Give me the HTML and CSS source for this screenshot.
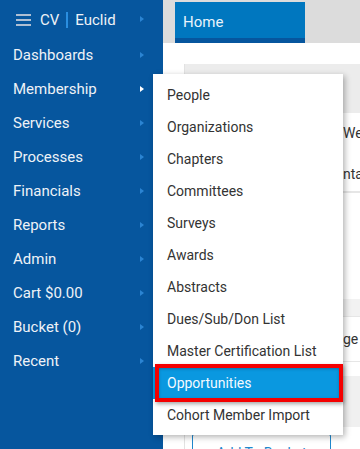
FILE: index.html
```html
<!DOCTYPE html>
<html>
<head>
<meta charset="utf-8">
<link rel="stylesheet" href="styles.css">
</head>
<body>
<div class="app">
  <nav class="sidebar">
    <div class="brand">
      <span class="burger"><i></i><i></i><i></i></span>
      <span class="cv">CV</span>
      <span class="sep"></span>
      <span class="euclid">Euclid</span>
      <span class="arrow"></span>
    </div>
    <div class="item">Dashboards<span class="arrow"></span></div>
    <div class="item">Membership<span class="arrow white"></span></div>
    <div class="item">Services<span class="arrow"></span></div>
    <div class="item">Processes<span class="arrow"></span></div>
    <div class="item">Financials<span class="arrow"></span></div>
    <div class="item">Reports<span class="arrow"></span></div>
    <div class="item">Admin<span class="arrow"></span></div>
    <div class="item">Cart $0.00<span class="arrow"></span></div>
    <div class="item">Bucket (0)<span class="arrow"></span></div>
    <div class="item">Recent<span class="arrow"></span></div>
  </nav>
  <main class="main">
    <div class="topbar">
      <div class="tab">Home</div>
    </div>
    <div class="content">
      <div class="panel">
        <div class="panel-head"></div>
        <div class="row r1"><span class="txt">Wee</span></div>
        <div class="row r2"><span class="txt">nta</span></div>
        <div class="gap"></div>
        <div class="band"></div>
        <div class="row r3"><span class="txt">ge</span></div>
        <div class="gap2"></div>
        <div class="band2"></div>
        <div class="btnrow"><span class="btn">Add To Bucket</span></div>
      </div>
    </div>
  </main>
  <div class="dropdown">
    <div class="dd-item">People</div>
    <div class="dd-item">Organizations</div>
    <div class="dd-item">Chapters</div>
    <div class="dd-item">Committees</div>
    <div class="dd-item">Surveys</div>
    <div class="dd-item">Awards</div>
    <div class="dd-item">Abstracts</div>
    <div class="dd-item">Dues/Sub/Don List</div>
    <div class="dd-item">Master Certification List</div>
    <div class="dd-item active">Opportunities</div>
    <div class="dd-item">Cohort Member Import</div>
    <div class="frame"></div>
  </div>
</div>
</body>
</html>
```
FILE: styles.css
```css
* { box-sizing: border-box; }
html, body { margin: 0; padding: 0; }
body {
  font-family: Roboto, "Noto Sans", Arial, sans-serif;
  width: 360px;
  height: 449px;
  overflow: hidden;
  background: #fff;
}
.app {
  position: relative;
  display: flex;
  width: 360px;
  height: 449px;
  overflow: hidden;
}
.sidebar {
  width: 163px;
  flex: none;
  height: 449px;
  background: #06569e;
  color: #eef2f7;
}
.brand {
  height: 38px;
  display: flex;
  align-items: center;
  padding-left: 16px;
  font-size: 15px;
  position: relative;
}
.burger {
  display: flex;
  flex-direction: column;
  gap: 3px;
  width: 15px;
  margin-right: 9px;
  margin-top: 2px;
}
.burger i {
  display: block;
  height: 2px;
  background: #aebfd3;
}
.cv { margin-top: 1px; }
.sep {
  width: 2px;
  height: 16px;
  background: #2a8ee0;
  margin: 1px 7px 0 7px;
}
.euclid { margin-top: 1px; }
.item {
  height: 34px;
  display: flex;
  align-items: center;
  padding-left: 13px;
  font-size: 15px;
  position: relative;
}
.arrow {
  position: absolute;
  left: 140px;
  top: 50%;
  margin-top: -3px;
  width: 0;
  height: 0;
  border-top: 3.5px solid transparent;
  border-bottom: 3.5px solid transparent;
  border-left: 4px solid #2b84d2;
}
.arrow.white { border-left-color: #ffffff; }
.main {
  flex: 1;
  display: flex;
  flex-direction: column;
  min-width: 0;
}
.topbar {
  height: 43px;
  background: #dcdcdc;
  padding: 2px 0 0 12px;
}
.tab {
  width: 130px;
  height: 41px;
  background: #0077bf;
  border-bottom: 5px solid #06569e;
  color: #e9f3fb;
  font-size: 15px;
  padding: 11px 0 0 8px;
}
.content {
  flex: 1;
  padding: 21px 0 0 21px;
}
.panel {
  border-left: 1px solid #e2e2e2;
  width: 176px;
}
.panel-head {
  height: 49px;
  background: #ececec;
}
.row {
  height: 40px;
  display: flex;
  align-items: center;
  padding-left: 158px;
  font-size: 14px;
  color: #333;
}
.r2 { border-bottom: 2px solid #e6e6e6; padding-top: 4px; }
.txt { white-space: nowrap; }
.gap { height: 106px; }
.band { height: 18px; background: #f2f2f2; border-bottom: 1px solid #e6e6e6; }
.row.r3 { height: 45px; border-bottom: 1px solid #e6e6e6; }
.gap2 { height: 14px; }
.band2 { height: 51px; background: #f0f0f0; }
.btnrow { padding: 7px 0 0 7px; }
.btn {
  display: block;
  width: 139px;
  height: 30px;
  border: 1px solid #1f87cc;
  border-radius: 2px;
  color: #1f87cc;
  font-size: 14px;
  text-align: center;
  padding-top: 10px;
}
.dropdown {
  position: absolute;
  left: 153px;
  top: 74px;
  width: 190px;
  height: 361px;
  background: #fff;
  box-shadow: 2px 2px 6px rgba(0,0,0,0.3);
  padding-top: 5px;
}
.dd-item {
  height: 32px;
  display: flex;
  align-items: center;
  padding-left: 14px;
  font-size: 14px;
  color: #333;
  white-space: nowrap;
}
.dd-item.active {
  background: #0a98e0;
  color: #f4faff;
}
.frame {
  position: absolute;
  left: 2px;
  top: 290px;
  width: 188px;
  height: 38px;
  border: 4px solid #f40000;
  box-shadow: 1px 2px 4px rgba(0,0,0,0.35), inset 0 1px 3px rgba(0,0,0,0.25);
}
```
